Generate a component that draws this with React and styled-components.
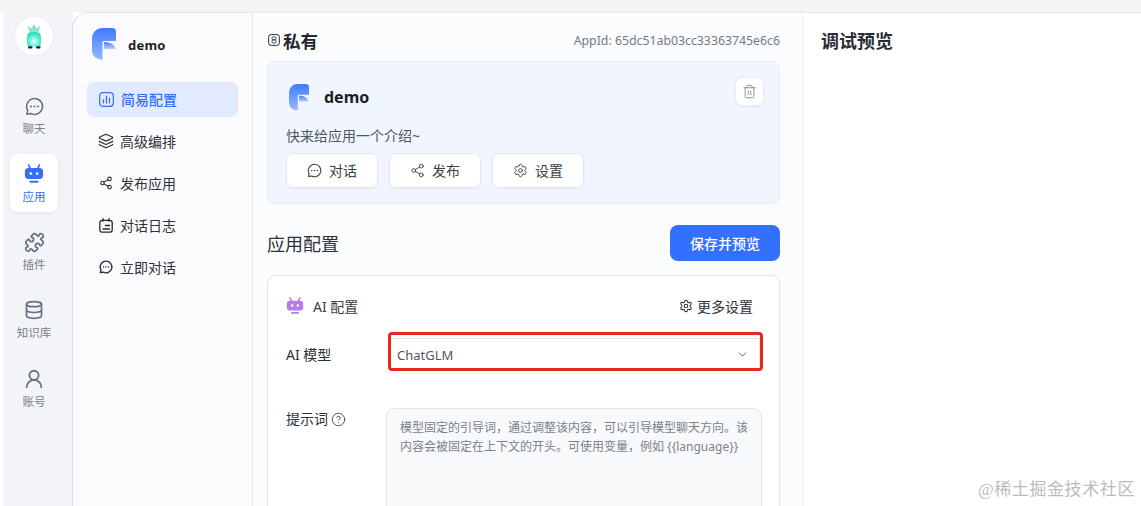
import React from "react";
import styled, { createGlobalStyle } from "styled-components";
import { Layers, Share2, Settings, Trash2, CircleHelp, ChevronDown, Puzzle, Database, UserRound } from "lucide-react";

const Global = createGlobalStyle`
  html, body { margin: 0; padding: 0; width: 1141px; height: 506px; overflow: hidden; background: #fff; }
  * { box-sizing: border-box; }
  body { font-family: "Noto Sans", "Noto Sans CJK SC", sans-serif; color: #24282c; }
`;

const Page = styled.div`position: relative; width: 1141px; height: 506px; overflow: hidden; display: flex; flex-direction: column;`;
const TopStrip = styled.div`height: 12px; flex: none; background: #f4f4f5;`;
const Body = styled.div`flex: 1; min-height: 0; display: flex; padding-left: 3px;`;

const Sidebar = styled.nav`
  width: 70px; flex: none; background: #f3f4f8; display: flex; flex-direction: column; align-items: flex-start; padding: 5px 0 0 7px;
`;
const Avatar = styled.div`
  width: 38px; height: 38px; border-radius: 50%; background: #fff; display: flex; align-items: center; justify-content: center;
  margin: 0 0 31px 5px; flex: none; box-shadow: 0 0 3px rgba(0,0,0,.06);
`;
const SideItem = styled.div`
  width: 48px; height: 58px; flex: none; margin-bottom: ${p => p.$gap ?? 10}px; border-radius: 8px; display: flex; flex-direction: column; align-items: center; justify-content: flex-start; padding-top: 9px;
  color: ${p => p.$active ? "#3370ff" : "#6b7184"};
  background: ${p => p.$active ? "#fff" : "transparent"};
  box-shadow: ${p => p.$active ? "0 1px 4px rgba(30,50,100,.07)" : "none"};
`;
const SideIcon = styled.div`height: 22px; display: flex; align-items: center; justify-content: center;`;
const SideLabel = styled.span`font-size: 11.500px; line-height: 15px; margin-top: 4px; white-space: nowrap; color: ${p => p.$active ? "#3370ff" : "#7a7f8d"};`;

const AppPanel = styled.aside`
  width: 181px; flex: none; background: #fbfbfd; border-top: 1px solid #e4e5e8; border-left: 1px solid #d9dce2; border-right: 1px solid #e4e6ea;
  border-top-left-radius: 16px; margin-left: -1px; padding: 15px 14px 0 14px; display: flex; flex-direction: column;
`;
const AppHead = styled.div`display: flex; align-items: center; gap: 12px; padding-left: 5px; height: 32px; margin-bottom: 22px;`;
const AppName = styled.span`font-size: 13px; font-weight: 700; letter-spacing: .2px; color: #1b1f24; padding-top: 2px;`;
const MenuItem = styled.div`
  height: 35px; width: 151px; flex: none; margin-bottom: 7px; border-radius: 7px; display: flex; align-items: center; gap: 7px; padding: 0 0 1px 12px;
  font-size: 14px; font-weight: ${p => p.$active ? 500 : 400};
  color: ${p => p.$active ? "#3370ff" : "#2d3238"};
  background: ${p => p.$active ? "#e1eafe" : "transparent"};
`;

const Center = styled.main`
  width: 550px; flex: none; background: #fbfcfe; border-top: 1px solid #e8e8ea; border-right: 1px solid #eceef1; padding: 0 22px 0 14px; display: flex; flex-direction: column; overflow: hidden;
`;
const TitleRow = styled.div`height: 48px; flex: none; display: flex; align-items: center; justify-content: space-between; padding-top: 6px;`;
const Privacy = styled.div`display: flex; align-items: center; gap: 3px; padding-left: 1px; font-size: 17.500px; font-weight: 700; color: #24282c;`;
const AppId = styled.span`font-size: 12.300px; color: #737a85;`;

const InfoCard = styled.section`
  height: 143px; flex: none; background: #f1f5fe; border: 1px solid #e6ebf6; border-radius: 8px; padding: 22px 14px 0 18px; position: relative;
`;
const InfoHead = styled.div`display: flex; align-items: center; gap: 15px; padding-left: 3px; height: 26px;`;
const InfoName = styled.span`font-size: 16px; font-weight: 700; color: #1b1f24;`;
const Intro = styled.p`margin: 16px 0 7px; font-size: 14px; line-height: 20px; color: #4f5663;`;
const Actions = styled.div`display: flex; gap: 11px;`;
const ActionBtn = styled.button`
  width: 92px; height: 35px; background: #fff; border: 1px solid #e4e7ee; border-radius: 7px; display: flex; align-items: center; justify-content: center; gap: 7px;
  font: 400 14px "Noto Sans", "Noto Sans CJK SC", sans-serif; color: #3b414a; padding: 0 0 1px; box-shadow: 0 1px 2px rgba(30,50,100,.05);
`;
const DeleteBtn = styled.button`
  position: absolute; top: 15px; right: 15px; width: 29px; height: 29px; background: #fff; border: 1px solid #e8ebf1; border-radius: 7px; display: flex; align-items: center; justify-content: center; padding: 0; color: #878c95;
  box-shadow: 0 1px 2px rgba(30,50,100,.06);
`;

const ConfigHead = styled.div`height: 71px; flex: none; display: flex; align-items: center; justify-content: space-between; padding-top: 7px;`;
const ConfigTitle = styled.h2`margin: 0; font-size: 18px; font-weight: 400; color: #2d3238;`;
const SaveBtn = styled.button`
  width: 110px; height: 36px; background: #3370ff; border: 0; border-radius: 8px; color: #fff; font: 500 14px "Noto Sans", "Noto Sans CJK SC", sans-serif; padding: 0;
`;

const ConfigCard = styled.section`
  flex: none; height: 260px; width: 513px; background: #fff; border: 1px solid #e3e5e9; border-radius: 8px; padding: 20px 16px 0 18px; display: flex; flex-direction: column;
`;
const CardHead = styled.div`height: 22px; display: flex; align-items: center; justify-content: space-between; padding-right: 10px; margin-bottom: 16px;`;
const CardTitle = styled.div`display: flex; align-items: center; gap: 9px; font-size: 14px; color: #3b414a;`;
const MoreLink = styled.div`display: flex; align-items: center; gap: 4px; font-size: 14px; color: #2d3238;`;
const Row = styled.div`display: flex; align-items: ${p => p.$top ? "flex-start" : "center"}; margin-bottom: ${p => p.$gap ?? 0}px;`;
const FieldLabel = styled.label`width: 102px; flex: none; font-size: 14px; color: #2d3238; display: flex; align-items: center; gap: 3px; padding-top: ${p => p.$pt ?? 0}px; line-height: 18px;`;
const Highlight = styled.div`
  width: 375px; height: 39px; flex: none; border: 3px solid #e8281f; border-radius: 4px; padding: 3px 0 0 0;
`;
const Select = styled.div`
  height: 30px; border-top: 1px solid #dcdfe3; border-right: 1px solid #e3e5e9; display: flex; align-items: center; justify-content: space-between; padding: 2px 10px 0 6px; font-size: 13px; color: #4f5663;
`;
const Prompt = styled.div`
  width: 376px; height: 140px; flex: none; margin-left: -2px; background: #f7f9fb; border: 1px solid #e3e6ea; border-radius: 8px; padding: 9px 13px; font-size: 12px; line-height: 19px; color: #7b828c;
`;

const Preview = styled.section`flex: 1; background: #fff; border-top: 1px solid #e8e8ea; padding: 16px 18px;`;
const PreviewTitle = styled.h2`margin: 0; font-size: 18px; line-height: 24px; font-weight: 700; color: #2a2e33;`;
const Watermark = styled.div`position: absolute; right: 6px; bottom: 6px; font: 400 17px/20px "Liberation Serif", "Noto Sans CJK SC", serif; color: #bcbcbc; letter-spacing: .6px;`;

const Chat = ({ size = 14, sw = 1.8 }) => (
  <svg width={size} height={size} viewBox="0 0 18 18" fill="none">
    <path d="M9 1.500a7.500 7.500 0 1 1-3.500 14.100L1.800 16.300l.8-3.500A7.500 7.500 0 0 1 9 1.500Z" stroke="currentColor" strokeWidth={sw} strokeLinejoin="round" />
    <circle cx="5.700" cy="9" r="1" fill="currentColor" />
    <circle cx="9" cy="9" r="1" fill="currentColor" />
    <circle cx="12.300" cy="9" r="1" fill="currentColor" />
  </svg>
);
const Logo = ({ w = 24, id = "a" }) => (
  <svg width={w} height={w * 4 / 3} viewBox="0 0 24 32">
    <defs>
      <linearGradient id={id + "1"} x1="0" y1="0" x2="0" y2="1"><stop offset="0" stopColor="#3f7bff" /><stop offset="1" stopColor="#97b9ff" /></linearGradient>
      <linearGradient id={id + "2"} x1="0" y1="0" x2="0" y2="1"><stop offset="0" stopColor="#4a80f5" /><stop offset="1" stopColor="#b9ccff" /></linearGradient>
    </defs>
    <path d="M10 0H20a4 4 0 0 1 4 4V13H12a1.500 1.500 0 0 0-1.500 1.500V32C4 31 0 28 0 22V10A10 10 0 0 1 10 0Z" fill={`url(#${id}1)`} />
    <path d="M12 14c6 0 10 2 11.500 7H12Z" fill={`url(#${id}2)`} />
  </svg>
);
const Bot = ({ size = 20, color = "#3370ff" }) => (
  <svg width={size} height={size} viewBox="0 0 22 22" fill={color}>
    <path d="M5 1l2 4M17 1l-2 4" stroke={color} strokeWidth="1.800" strokeLinecap="round" />
    <path d="M5 4.500h12a4 4 0 0 1 4 4v4a4 4 0 0 1-4 4H5a4 4 0 0 1-4-4v-4a4 4 0 0 1 4-4Z" />
    <rect x="6" y="18.300" width="10" height="2.200" rx="1.100" />
    <circle cx="7.500" cy="10.500" r="1.500" fill="#fff" />
    <circle cx="14.500" cy="10.500" r="1.500" fill="#fff" />
  </svg>
);
const Bars = () => (
  <svg width="15" height="15" viewBox="0 0 15 15" fill="none" stroke="#3370ff" strokeWidth="1.200" strokeLinecap="round">
    <rect x=".7" y=".7" width="13.600" height="13.600" rx="3" />
    <path d="M4.500 7.500v3.500M7.500 4v7M10.500 6v5" />
  </svg>
);
const Log = () => (
  <svg width="14" height="15" viewBox="0 0 14 15" fill="none" stroke="#24282c" strokeWidth="1.300" strokeLinecap="round">
    <rect x=".8" y="2.300" width="12.400" height="11.900" rx="2.500" />
    <path d="M4 .7v2.500M10 .7v2.500M6.500 7.500h4M4 11h6.500" />
  </svg>
);
const Lock = () => (
  <svg width="12" height="12" viewBox="0 0 12 12" fill="none" stroke="#2d3238">
    <rect x=".6" y=".6" width="10.800" height="10.800" rx="2.500" strokeWidth="1" />
    <rect x="4" y="2.800" width="4" height="3" rx="1.400" strokeWidth=".9" />
    <rect x="4" y="5.800" width="4" height="3.300" rx="1.400" strokeWidth=".9" />
  </svg>
);
const Creature = () => (
  <svg width="18" height="27" viewBox="0 0 18 26">
    <defs>
      <radialGradient id="glow" cx=".5" cy=".65" r=".6"><stop offset="0" stopColor="#f0fffb" /><stop offset=".5" stopColor="#6ff3dc" /><stop offset="1" stopColor="#2fdcc0" /></radialGradient>
    </defs>
    <path d="M5 10 2.500 2l4 3L9 .5 11.500 5l4-3L13 10Z" fill="#8fe0cf" />
    <path d="M3 10c2-2 10-2 12 0 1.500 3 1.500 10 0 13H3C1.500 20 1.500 13 3 10Z" fill="url(#glow)" />
    <rect x="3" y="22.800" width="4.500" height="2.200" rx="1" fill="#14202a" />
    <rect x="11" y="22.800" width="4.500" height="2.200" rx="1" fill="#14202a" />
  </svg>
);

const sideItems = [
  { label: "聊天", icon: <Chat size={19} sw={1.5} /> },
  { label: "应用", icon: <Bot />, active: true },
  { label: "插件", icon: <Puzzle size={21} strokeWidth={2} /> },
  { label: "知识库", icon: <Database size={20} strokeWidth={2} />, gap: 11 },
  { label: "账号", icon: <UserRound size={22} strokeWidth={2} /> },
];
const iconProps = { size: 14, strokeWidth: 1.900 };
const menu = [
  { label: "简易配置", icon: <Bars />, active: true },
  { label: "高级编排", icon: <Layers size={16} strokeWidth={1.800} style={{ margin: "0 -1px" }} /> },
  { label: "发布应用", icon: <Share2 {...iconProps} /> },
  { label: "对话日志", icon: <Log /> },
  { label: "立即对话", icon: <Chat /> },
];
const promptText = "模型固定的引导词，通过调整该内容，可以引导模型聊天方向。该内容会被固定在上下文的开头。可使用变量，例如 {{language}}";

export default function App() {
  return (
    <Page>
      <Global />
      <TopStrip />
      <Body>
        <Sidebar>
          <Avatar><Creature /></Avatar>
          {sideItems.map(s => (
            <SideItem key={s.label} $active={s.active} $gap={s.gap}>
              <SideIcon>{s.icon}</SideIcon>
              <SideLabel $active={s.active}>{s.label}</SideLabel>
            </SideItem>
          ))}
        </Sidebar>
        <AppPanel>
          <AppHead><Logo id="l" /><AppName>demo</AppName></AppHead>
          {menu.map(m => (
            <MenuItem key={m.label} $active={m.active}>{m.icon}{m.label}</MenuItem>
          ))}
        </AppPanel>
        <Center>
          <TitleRow>
            <Privacy><Lock />私有</Privacy>
            <AppId>AppId: 65dc51ab03cc33363745e6c6</AppId>
          </TitleRow>
          <InfoCard>
            <InfoHead><Logo w={20} id="m" /><InfoName>demo</InfoName></InfoHead>
            <Intro>快来给应用一个介绍~</Intro>
            <Actions>
              <ActionBtn><Chat size={15} sw={1.3} />对话</ActionBtn>
              <ActionBtn><Share2 size={15} strokeWidth={1.500} />发布</ActionBtn>
              <ActionBtn><Settings size={15} strokeWidth={1.500} />设置</ActionBtn>
            </Actions>
            <DeleteBtn><Trash2 size={15} strokeWidth={1.500} /></DeleteBtn>
          </InfoCard>
          <ConfigHead>
            <ConfigTitle>应用配置</ConfigTitle>
            <SaveBtn>保存并预览</SaveBtn>
          </ConfigHead>
          <ConfigCard>
            <CardHead>
              <CardTitle><Bot size={18} color="#b57be8" />AI 配置</CardTitle>
              <MoreLink><Settings size={14} strokeWidth={1.800} />更多设置</MoreLink>
            </CardHead>
            <Row $gap={37}>
              <FieldLabel $pt={7}>AI 模型</FieldLabel>
              <Highlight>
                <Select>ChatGLM<ChevronDown size={13} strokeWidth={1.700} color="#4f5663" /></Select>
              </Highlight>
            </Row>
            <Row $top>
              <FieldLabel $pt={2}>提示词<CircleHelp size={15} strokeWidth={1.300} /></FieldLabel>
              <Prompt>{promptText}</Prompt>
            </Row>
          </ConfigCard>
        </Center>
        <Preview><PreviewTitle>调试预览</PreviewTitle></Preview>
      </Body>
      <Watermark>@稀土掘金技术社区</Watermark>
    </Page>
  );
}
